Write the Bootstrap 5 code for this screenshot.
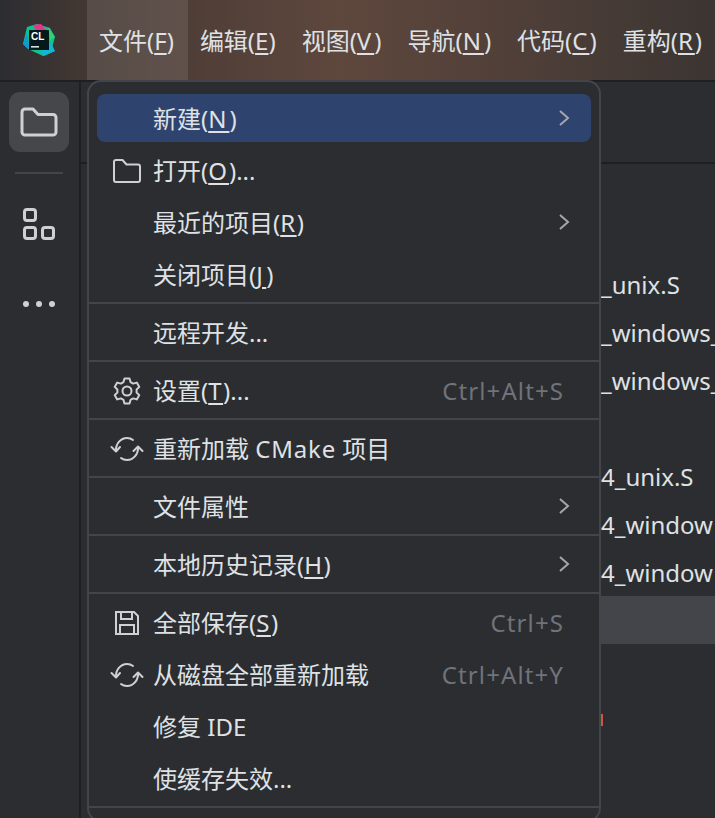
<!DOCTYPE html>
<html lang="zh-CN">
<head>
<meta charset="utf-8">
<title>CLion 文件菜单</title>
<link rel="stylesheet" href="https://cdn.jsdelivr.net/npm/bootstrap@5.3.0/dist/css/bootstrap.min.css">
<style>
html, body { height: 100%; }
body { background: #2b2d30; overflow: hidden; font-family: "Noto Sans", "Noto Sans CJK SC", sans-serif; font-size: 24px; color: #dfe1e5; }
u { text-underline-offset: 3px; text-decoration-thickness: 2px; letter-spacing: 1.5px; }
u.ls-0 { letter-spacing: 0; }
u.ls-2 { letter-spacing: 2px; }
u.ls-3 { letter-spacing: 3px; }
u.ls-4 { letter-spacing: 3.5px; }
.ls-word { letter-spacing: .8px; }
.ide-shell { width: 715px; height: 818px; position: relative; overflow: hidden; }
.title-strip { height: 80px; background: linear-gradient(90deg, #2c2d31 0, #453833 90px, #5e473d 340px, #4f3f38 520px, #3b3533 715px); }
.logo-slot { width: 87px; flex: none; }
.top-item { height: 80px; padding: 2px 14px 0 12px; flex: none; white-space: nowrap; line-height: 1; }
.top-item.is-open { background: rgba(255,255,255,.1); }
.work-zone { height: 738px; border-top: 2px solid #1e1f22; }
.side-rail { width: 81px; border-right: 2px solid #1e1f22; padding-top: 10px; }
.rail-btn { width: 60px; height: 60px; margin-left: 9px; border-radius: 11px; }
.rail-btn.is-on { background: #45474b; }
.rail-rule { width: 48px; height: 2px; margin: 20px 0 34px 15px; background: #43454a; }
.rail-plain { height: 32px; margin-left: 23px; }
.rail-plain + .rail-plain { margin-top: 48px; }
.editor-zone { min-width: 0; }
.tab-strip { height: 82px; border-bottom: 2px solid #1e1f22; }
.tree-list { padding-top: 96px; }
.tree-row { height: 48px; padding-left: 520px; padding-top: 2px; white-space: nowrap; line-height: 1; }
.tree-row.is-picked { background: #43454a; margin-left: 8px; padding-left: 512px; }
.tree-mark { height: 12px; width: 2px; background: #c9583f; margin: 70px 0 0 520px; }
.file-menu.dropdown-menu { position: absolute; display: flex; flex-direction: column; top: 80px; left: 87px; width: 514px; margin: 0; padding: 10px 8px; background: #2b2d30; border: 2px solid #43454a; border-radius: 14px; font-size: 24px; color: #dfe1e5; }
.file-menu .dropdown-item { display: flex; align-items: center; flex: none; height: 48px; margin: 2px 0; padding: 1px 0 0; color: #dfe1e5; border-radius: 8px; background: transparent; white-space: nowrap; }
.file-menu .dropdown-item.is-current { background: #2e436e; }
.file-menu .dropdown-divider { margin: 2px -8px; border-top: 2px solid #43454a; opacity: 1; height: 0; flex: none; }
.ico-slot { width: 56px; flex: none; display: flex; justify-content: center; padding-left: 4px; }
.key-hint { margin-left: auto; margin-right: 27px; color: #6f737a; letter-spacing: 1.1px; }
.sub-arrow { margin-left: auto; margin-right: 21px; margin-top: -2px; }
</style>
</head>
<body>
<div class="ide-shell d-flex flex-column">
  <header class="title-strip d-flex align-items-center flex-shrink-0">
    <div class="logo-slot d-flex">
      <svg style="margin-left:22px" width="34" height="34" viewBox="0 0 34 34" aria-label="CLion">
        <polygon points="1,21 5,4 15,1 28,5 33,14 30,25 33,28 21,33 6,26" fill="#13c08f"/>
        <polygon points="11,2 19,1 24,7 14,8" fill="#e0388b"/>
        <polygon points="1,21 5,10 8,27" fill="#0c9bd6"/>
        <polygon points="22,33 33,28 29,20 18,28" fill="#15b5d6"/>
        <polygon points="26,4 33,14 28,17" fill="#2ed46f"/>
        <rect x="7" y="7" width="20" height="20" fill="#06191a"/>
        <text x="9" y="17" font-family="Liberation Sans, sans-serif" font-weight="700" font-size="10" fill="#fff">CL</text>
        <rect x="9" y="23" width="8" height="1.6" fill="#ddd"/>
      </svg>
    </div>
    <div class="top-item is-open d-flex align-items-center"><span>文件(<u class="ls-0">F</u>)</span></div>
    <div class="top-item d-flex align-items-center"><span>编辑(<u class="ls-0">E</u>)</span></div>
    <div class="top-item d-flex align-items-center"><span>视图(<u class="ls-3">V</u>)</span></div>
    <div class="top-item d-flex align-items-center"><span>导航(<u class="ls-3">N</u>)</span></div>
    <div class="top-item d-flex align-items-center"><span>代码(<u class="ls-2">C</u>)</span></div>
    <div class="top-item d-flex align-items-center"><span>重构(<u class="ls-2">R</u>)</span></div>
  </header>
  <div class="work-zone d-flex">
    <aside class="side-rail flex-shrink-0">
      <div class="rail-btn is-on d-flex align-items-center justify-content-center">
        <svg width="38" height="32" viewBox="0 0 38 32" fill="none" stroke="#ced0d6" stroke-width="3" stroke-linejoin="round"><path d="M2 6a3 3 0 0 1 3-3h8l5 5.500h15a3 3 0 0 1 3 3V26a3 3 0 0 1-3 3H5a3 3 0 0 1-3-3z"/></svg>
      </div>
      <div class="rail-rule"></div>
      <div class="rail-plain">
        <svg class="d-block" width="32" height="32" viewBox="0 0 32 32" fill="none" stroke="#ced0d6" stroke-width="3"><rect x="1.500" y="1.500" width="11" height="11" rx="2.500"/><rect x="1.500" y="19.500" width="11" height="11" rx="2.500"/><rect x="19.500" y="19.500" width="11" height="11" rx="2.500"/></svg>
      </div>
      <div class="rail-plain">
        <svg class="d-block" width="32" height="32" viewBox="0 0 32 32" fill="#ced0d6"><circle cx="3" cy="16" r="3"/><circle cx="16" cy="16" r="3"/><circle cx="29" cy="16" r="3"/></svg>
      </div>
    </aside>
    <main class="editor-zone flex-grow-1">
      <div class="tab-strip"></div>
      <div class="tree-list">
        <div class="tree-row d-flex align-items-center">_unix.S</div>
        <div class="tree-row d-flex align-items-center">_windows_</div>
        <div class="tree-row d-flex align-items-center">_windows_</div>
        <div class="tree-row"></div>
        <div class="tree-row d-flex align-items-center">4_unix.S</div>
        <div class="tree-row d-flex align-items-center">4_window</div>
        <div class="tree-row d-flex align-items-center">4_window</div>
        <div class="tree-row is-picked"></div>
        <div class="tree-mark"></div>
      </div>
    </main>
  </div>
  <div class="file-menu dropdown-menu show">
    <a class="dropdown-item is-current" href="#"><span class="ico-slot"></span><span>新建(<u class="ls-3">N</u>)</span>
      <svg class="sub-arrow" width="12" height="18" viewBox="0 0 12 18" fill="none" stroke="#a4a7ae" stroke-width="2"><path d="M2 2l8 7-8 7"/></svg></a>
    <a class="dropdown-item" href="#"><span class="ico-slot"><svg width="30" height="26" viewBox="0 0 30 26" fill="none" stroke="#ced0d6" stroke-width="2" stroke-linejoin="round"><path d="M2 4a2 2 0 0 1 2-2h6.500l4 4.500H26a2 2 0 0 1 2 2V22a2 2 0 0 1-2 2H4a2 2 0 0 1-2-2z"/></svg></span><span>打开(<u class="ls-2">O</u>)...</span></a>
    <a class="dropdown-item" href="#"><span class="ico-slot"></span><span>最近的项目(<u>R</u>)</span>
      <svg class="sub-arrow" width="12" height="18" viewBox="0 0 12 18" fill="none" stroke="#a4a7ae" stroke-width="2"><path d="M2 2l8 7-8 7"/></svg></a>
    <a class="dropdown-item" href="#"><span class="ico-slot"></span><span>关闭项目(<u class="ls-4">J</u>)</span></a>
    <div class="dropdown-divider"></div>
    <a class="dropdown-item" href="#"><span class="ico-slot"></span><span>远程开发...</span></a>
    <div class="dropdown-divider"></div>
    <a class="dropdown-item" href="#"><span class="ico-slot"><svg width="28" height="28" viewBox="0 0 28 28" fill="none" stroke="#ced0d6" stroke-width="2" stroke-linejoin="round"><path d="M11.500 1.500h5l1 3.600 2.700 1.500 3.600-1 2.500 4.300-2.700 2.600v3l2.700 2.600-2.500 4.300-3.600-1-2.700 1.500-1 3.600h-5l-1-3.600-2.700-1.500-3.600 1-2.500-4.300 2.700-2.600v-3L1.700 9.900l2.500-4.300 3.600 1 2.700-1.500z"/><circle cx="14" cy="14" r="4.500"/></svg></span><span>设置(<u>T</u>)...</span><span class="key-hint">Ctrl+Alt+S</span></a>
    <div class="dropdown-divider"></div>
    <a class="dropdown-item" href="#"><span class="ico-slot"><svg width="34" height="26" viewBox="0 0 34 26" fill="none" stroke="#ced0d6" stroke-width="2" stroke-linecap="round" stroke-linejoin="round"><path d="M1.500 11l4.500 4.500L10 11M6 15c-.5-7 4.500-13 11-13 2.500 0 4.500.8 6 2"/><path d="M23.500 15l4.500-4.500 4.500 4.500M28 11c.5 7-4.500 13-11 13-2.500 0-4.500-.8-6-2"/></svg></span><span>重新加载 <span class="ls-word">CMake</span> 项目</span></a>
    <div class="dropdown-divider"></div>
    <a class="dropdown-item" href="#"><span class="ico-slot"></span><span>文件属性</span>
      <svg class="sub-arrow" width="12" height="18" viewBox="0 0 12 18" fill="none" stroke="#a4a7ae" stroke-width="2"><path d="M2 2l8 7-8 7"/></svg></a>
    <div class="dropdown-divider"></div>
    <a class="dropdown-item" href="#"><span class="ico-slot"></span><span>本地历史记录(<u>H</u>)</span>
      <svg class="sub-arrow" width="12" height="18" viewBox="0 0 12 18" fill="none" stroke="#a4a7ae" stroke-width="2"><path d="M2 2l8 7-8 7"/></svg></a>
    <div class="dropdown-divider"></div>
    <a class="dropdown-item" href="#"><span class="ico-slot"><svg width="26" height="26" viewBox="0 0 26 26" fill="none" stroke="#ced0d6" stroke-width="2"><path d="M2 2h18l4 4v18H2z"/><path d="M7 2v7h11V2M6 24v-9h14v9"/></svg></span><span>全部保存(<u>S</u>)</span><span class="key-hint">Ctrl+S</span></a>
    <a class="dropdown-item" href="#"><span class="ico-slot"><svg width="34" height="26" viewBox="0 0 34 26" fill="none" stroke="#ced0d6" stroke-width="2" stroke-linecap="round" stroke-linejoin="round"><path d="M1.500 11l4.500 4.500L10 11M6 15c-.5-7 4.500-13 11-13 2.500 0 4.500.8 6 2"/><path d="M23.500 15l4.500-4.500 4.500 4.500M28 11c.5 7-4.500 13-11 13-2.500 0-4.500-.8-6-2"/></svg></span><span>从磁盘全部重新加载</span><span class="key-hint">Ctrl+Alt+Y</span></a>
    <a class="dropdown-item" href="#"><span class="ico-slot"></span><span>修复 IDE</span></a>
    <a class="dropdown-item" href="#"><span class="ico-slot"></span><span>使缓存失效...</span></a>
    <div class="dropdown-divider"></div>
  </div>
</div>
<script src="https://cdn.jsdelivr.net/npm/bootstrap@5.3.0/dist/js/bootstrap.bundle.min.js"></script>
</body>
</html>
